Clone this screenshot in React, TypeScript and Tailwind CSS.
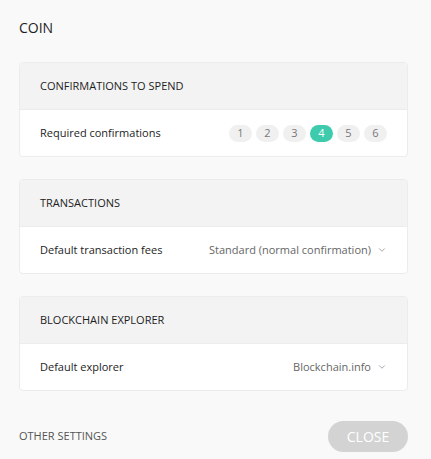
import { ChevronDown } from "lucide-react";

const levels = [1, 2, 3, 4, 5, 6];

function Card({ title, children }: { title: string; children: React.ReactNode }) {
  return (
    <div className="overflow-hidden rounded-[4px] border border-[#ececec] bg-white">
      <div className="flex h-[47px] items-center border-b border-[#ececec] bg-[#f3f3f3] px-5 text-[11px] uppercase text-[#1d1d1d]">
        {title}
      </div>
      <div className="flex h-[46px] items-center justify-between px-5 text-[11px] text-[#1d1d1d]">
        {children}
      </div>
    </div>
  );
}

function Select({ value }: { value: string }) {
  return (
    <div className="flex items-center gap-[6px] text-[#666]">
      <span>{value}</span>
      <ChevronDown size={10} strokeWidth={1.5} className="text-[#777]" />
    </div>
  );
}

export default function App() {
  return (
    <div
      className="flex h-[459px] w-[431px] flex-col bg-[#f9f9f9] pl-[19px] pr-[23px]"
      style={{ fontFamily: '"Open Sans", sans-serif' }}
    >
      <h1 className="mt-[17px] text-[14px] text-[#1d1d1d]">COIN</h1>

      <div className="mt-[24px] flex flex-col gap-[22px]">
        <Card title="Confirmations to spend">
          <span>Required confirmations</span>
          <div className="flex gap-[4px]">
            {levels.map((n) => (
              <div
                key={n}
                className={
                  n === 4
                    ? "flex h-[17px] w-[23px] items-center justify-center rounded-full bg-[#3ecbad] text-[11px] text-white"
                    : "flex h-[17px] w-[23px] items-center justify-center rounded-full bg-[#f0f0f0] text-[11px] text-[#777]"
                }
              >
                {n}
              </div>
            ))}
          </div>
        </Card>

        <Card title="Transactions">
          <span>Default transaction fees</span>
          <Select value="Standard (normal confirmation)" />
        </Card>

        <Card title="Blockchain explorer">
          <span>Default explorer</span>
          <Select value="Blockchain.info" />
        </Card>
      </div>

      <div className="mt-auto mb-[7px] flex items-center justify-between">
        <span className="text-[11px] uppercase text-[#555]">Other settings</span>
        <button className="h-[31px] w-[80px] rounded-full bg-[#d3d3d3] text-[14px] text-white">
          CLOSE
        </button>
      </div>
    </div>
  );
}
